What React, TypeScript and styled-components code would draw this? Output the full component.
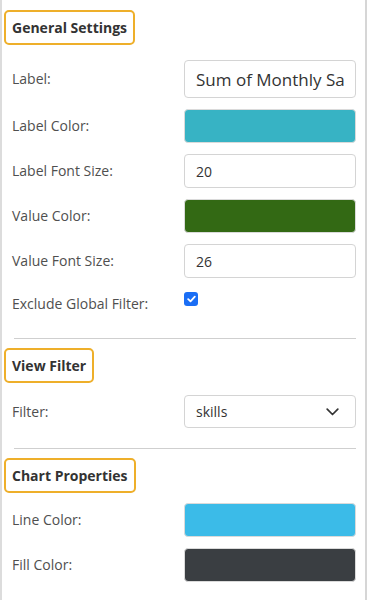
import React from 'react';
import styled, { createGlobalStyle } from 'styled-components';

const GlobalStyle = createGlobalStyle`
	html, body {
		margin: 0;
		padding: 0;
		background: #ffffff;
	}
	* {
		box-sizing: border-box;
	}
`;

const Panel = styled.div`
	width: 367px;
	height: 600px;
	overflow: hidden;
	background: #ffffff;
	border-left: 2px solid #dcdcdc;
	border-right: 2px solid #d6d6d6;
	padding: 10px 9px 0 2px;
	font-family: 'Open Sans', 'Liberation Sans', sans-serif;
	color: #4a4a4a;
`;

const SectionTitle = styled.div<{ $gap?: number }>`
	display: inline-block;
	padding: 6px 6px;
	border: 2px solid #eeaf2a;
	border-radius: 5px;
	font-size: 14px;
	line-height: 19px;
	font-weight: 700;
	color: #333333;
	margin-bottom: ${(p) => p.$gap ?? 12}px;
`;

const Row = styled.div<{ $align?: string; $mb?: number }>`
	display: grid;
	grid-template-columns: 172px 1fr;
	align-items: ${(p) => p.$align || 'center'};
	padding-left: 8px;
	margin-bottom: ${(p) => p.$mb ?? 11}px;
`;

const Label = styled.span`
	font-size: 14px;
	line-height: 24px;
	color: #4f4f4f;
`;

const TextInput = styled.input<{ $big?: boolean }>`
	width: 100%;
	height: ${(p) => (p.$big ? 38 : 34)}px;
	border: 1px solid #d4d4d4;
	border-radius: 4px;
	padding: 0 11px;
	outline: none;
	background: #ffffff;
	font-family: 'Open Sans', 'Liberation Sans', sans-serif;
	font-size: ${(p) => (p.$big ? 17 : 14)}px;
	color: #333333;
`;

const Swatch = styled.div<{ $color: string }>`
	height: 34px;
	border-radius: 4px;
	border: 1px solid #dadada;
	background: ${(p) => p.$color};
`;

const Check = styled.span`
	width: 14px;
	height: 14px;
	border-radius: 3px;
	background: #1a6ef5;
	display: flex;
	align-items: center;
	justify-content: center;
`;

const Select = styled.div`
	height: 33px;
	border: 1px solid #d4d4d4;
	border-radius: 4px;
	padding: 0 16px 0 11px;
	display: flex;
	align-items: center;
	justify-content: space-between;
	font-size: 14px;
	color: #333333;
`;

const Divider = styled.hr<{ $top: number }>`
	border: none;
	border-top: 1px solid #cfcfcf;
	margin: ${(p) => p.$top}px 0 9px 10px;
`;

export default function App() {
	return (
		<>
			<GlobalStyle />
			<Panel>
				<SectionTitle $gap={15}>General Settings</SectionTitle>
				<Row>
					<Label>Label:</Label>
					<TextInput $big readOnly value="Sum of Monthly Salary" />
				</Row>
				<Row>
					<Label>Label Color:</Label>
					<Swatch $color="#37b3c4" />
				</Row>
				<Row>
					<Label>Label Font Size:</Label>
					<TextInput readOnly value="20" />
				</Row>
				<Row>
					<Label>Value Color:</Label>
					<Swatch $color="#336914" />
				</Row>
				<Row $mb={14}>
					<Label>Value Font Size:</Label>
					<TextInput readOnly value="26" />
				</Row>
				<Row $align="start" $mb={0}>
					<Label>Exclude Global Filter:</Label>
					<Check>
						<svg width="9" height="8" viewBox="0 0 9 8">
							<path d="M1.2 4.2 L3.5 6.3 L7.8 1.6" fill="none" stroke="#fff" strokeWidth="1.8" strokeLinecap="round" strokeLinejoin="round" />
						</svg>
					</Check>
				</Row>
				<Divider $top={22} />
				<SectionTitle>View Filter</SectionTitle>
				<Row $mb={0}>
					<Label>Filter:</Label>
					<Select>
						<span>skills</span>
						<svg width="13" height="8" viewBox="0 0 13 8">
							<path d="M1.2 1.2 L6.5 6.5 L11.8 1.2" fill="none" stroke="#333" strokeWidth="1.7" strokeLinecap="round" strokeLinejoin="round" />
						</svg>
					</Select>
				</Row>
				<Divider $top={20} />
				<SectionTitle $gap={10}>Chart Properties</SectionTitle>
				<Row>
					<Label>Line Color:</Label>
					<Swatch $color="#3bbbe8" />
				</Row>
				<Row>
					<Label>Fill Color:</Label>
					<Swatch $color="#3a3e42" />
				</Row>
			</Panel>
		</>
	);
}
